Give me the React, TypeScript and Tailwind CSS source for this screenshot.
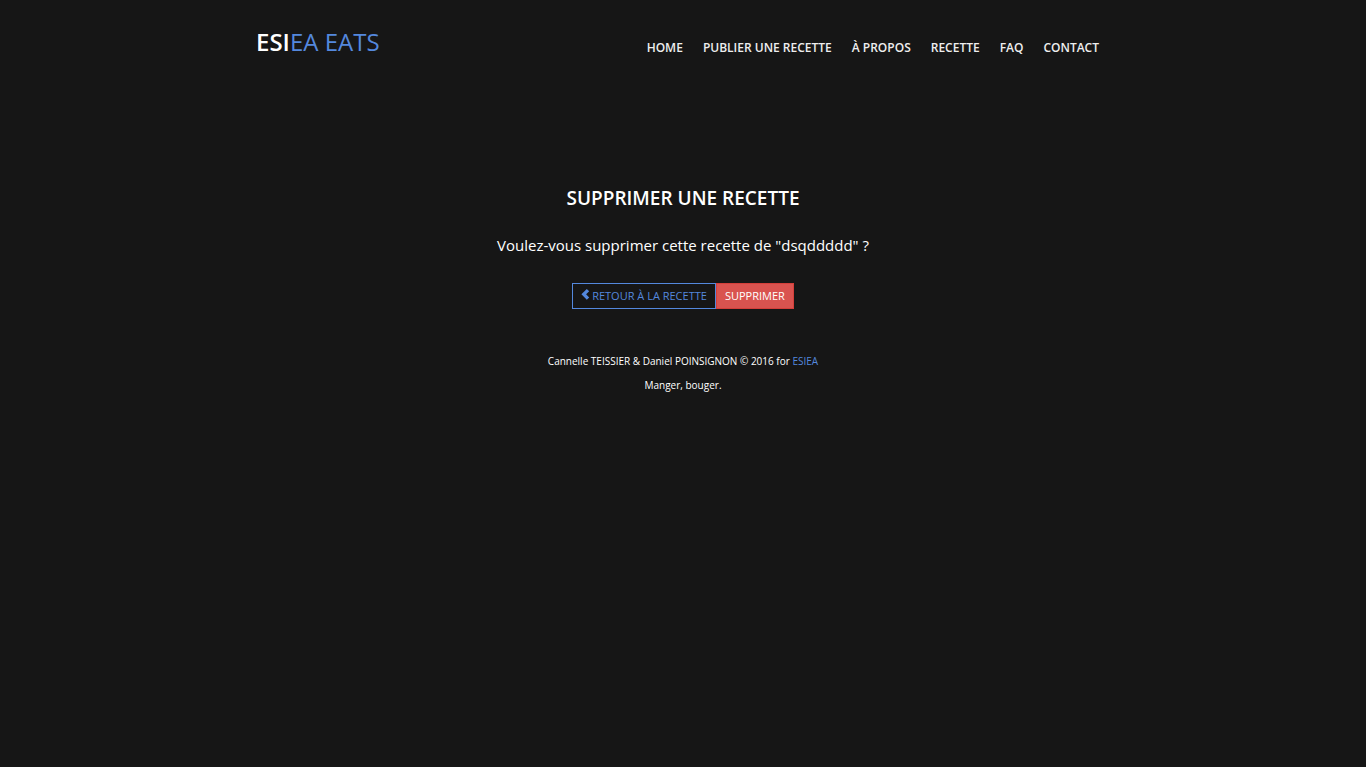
const links = ["Home", "Publier une recette", "À propos", "Recette", "FAQ", "Contact"];

function Header() {
  return (
    <header className="mx-auto flex w-full max-w-[854px] items-start justify-between">
      <a href="#" className="pt-6 text-2xl leading-9 font-semibold uppercase text-white">
        ESI<span className="font-normal text-[#5488dd]">EA Eats</span>
      </a>
      <nav className="flex gap-5 pt-[38px] pr-[11px] text-xs leading-5 font-semibold uppercase">
        {links.map((label) => (
          <a key={label} href="#" className="text-[#eeeeee]">
            {label}
          </a>
        ))}
      </nav>
    </header>
  );
}

export default function App() {
  return (
    <div className="min-h-screen bg-[#161616] font-['Open_Sans',sans-serif] text-white">
      <Header />
      <main className="flex flex-col items-center pt-[124px] text-center">
        <h1 className="text-[19px] leading-7 font-semibold uppercase">Supprimer une recette</h1>
        <p className="mt-[21px] text-[15px] leading-6">Voulez-vous supprimer cette recette de "dsqddddd" ?</p>
        <form className="mt-[26px] flex text-[11px] leading-4" onSubmit={(e) => e.preventDefault()}>
          <a href="#" className="flex h-[26px] items-center gap-0.5 border border-[#5488dd] px-2 uppercase text-[#5488dd]">
            <svg viewBox="1 0 9 11" className="mb-[3px] h-[11px] w-[9px] fill-current" aria-hidden="true">
              <path d="M6.8 0 L9.2 2.2 L6.1 5.3 L9.2 8.4 L6.8 10.7 L1.4 5.3 Z" />
            </svg>
            Retour à la recette
          </a>
          <button type="submit" className="h-[26px] border border-[#d43f3a] bg-[#d9534f] px-2 uppercase">
            Supprimer
          </button>
        </form>
      </main>
      <footer className="mt-10 text-center text-[10px] leading-6">
        <p>
          Cannelle TEISSIER &amp; Daniel POINSIGNON © 2016 for <a href="#" className="text-[#5488dd]">ESIEA</a>
        </p>
        <p>Manger, bouger.</p>
      </footer>
    </div>
  );
}
